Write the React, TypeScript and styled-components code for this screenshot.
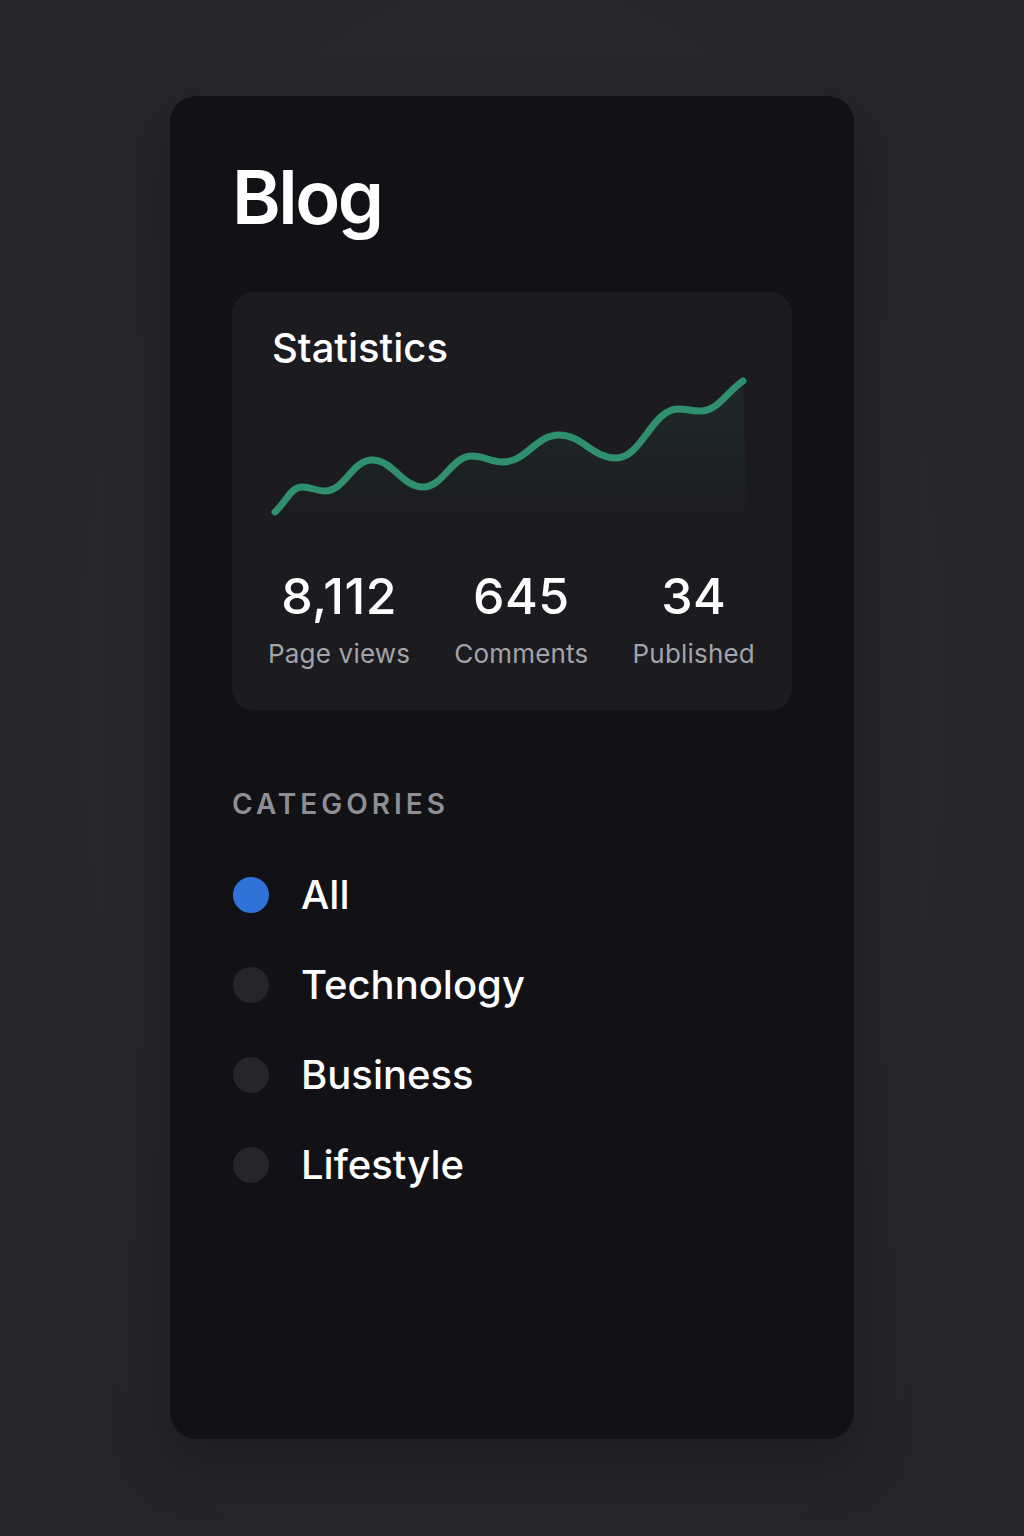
import React from "react";
import styled, { createGlobalStyle } from "styled-components";

const GlobalStyle = createGlobalStyle`
  html, body {
    margin: 0;
    padding: 0;
    background: #27282c;
  }
  body {
    font-family: Inter, "Noto Sans", "Liberation Sans", sans-serif;
    color: #ffffff;
    -webkit-font-smoothing: antialiased;
  }
`;

const Page = styled.div`
  min-height: 1536px;
  background: radial-gradient(ellipse at 50% 45%, #2a2b30 0%, #26272b 60%, #242529 100%);
  display: flex;
  justify-content: center;
  padding-top: 96px;
  box-sizing: border-box;
`;

const Card = styled.div`
  width: 684px;
  height: 1343px;
  box-sizing: border-box;
  background: #121216;
  border-radius: 26px;
  padding: 56px 62px 0;
  display: flex;
  flex-direction: column;
  box-shadow: 0 24px 60px rgba(0, 0, 0, 0.28), 0 0 0 1px rgba(255, 255, 255, 0.015);
`;

const Title = styled.h1`
  margin: 0;
  font-size: 74px;
  line-height: 90px;
  font-weight: 600;
  letter-spacing: -2.5px;
  color: #ffffff;
`;

const Panel = styled.section`
  margin-top: 50px;
  background: #1c1c20;
  border-radius: 22px;
  padding: 33px 0 40px;
  display: flex;
  flex-direction: column;
`;

const PanelTitle = styled.h2`
  margin: 0 0 0 40px;
  font-size: 40px;
  line-height: 46px;
  font-weight: 500;
  color: #ffffff;
`;

const Chart = styled.svg`
  display: block;
  margin: 4px 0 0 40px;
  width: 480px;
  height: 150px;
  overflow: visible;
`;

const StatsRow = styled.div`
  margin-top: 41px;
  padding: 0 37px 0 36px;
  display: flex;
  justify-content: space-between;
`;

const Stat = styled.div`
  display: flex;
  flex-direction: column;
  align-items: center;
  gap: 12px;
`;

const StatValue = styled.div`
  font-size: 50px;
  line-height: 60px;
  font-weight: 500;
  letter-spacing: 0.5px;
  color: #ffffff;
`;

const StatLabel = styled.div`
  font-size: 26px;
  line-height: 32px;
  font-weight: 400;
  letter-spacing: 0.2px;
  color: #a3a3aa;
`;

const SectionLabel = styled.h3`
  margin: 77px 0 0;
  font-size: 28px;
  line-height: 34px;
  font-weight: 600;
  letter-spacing: 4px;
  color: #8e8e94;
  text-transform: uppercase;
`;

const CategoryList = styled.ul`
  list-style: none;
  margin: 51px 0 0;
  padding: 0;
  display: flex;
  flex-direction: column;
  gap: 44px;
`;

const CategoryItem = styled.li`
  display: flex;
  align-items: center;
  gap: 32px;
  height: 46px;
`;

const Dot = styled.span<{ $active?: boolean }>`
  width: 36px;
  height: 36px;
  margin-left: 1px;
  border-radius: 50%;
  flex: none;
  background: ${(p) => (p.$active ? "#2f73d8" : "#25252b")};
`;

const CategoryName = styled.span`
  font-size: 40px;
  line-height: 46px;
  font-weight: 500;
  color: #ffffff;
`;

const points: [number, number][] = [
  [3, 137],
  [30, 112],
  [53, 116],
  [100, 85],
  [151, 112],
  [200, 81],
  [231, 87],
  [287, 60],
  [344, 83],
  [406, 34],
  [428, 36],
  [471, 6],
];

function smoothPath(pts: [number, number][]): string {
  const n = pts.length;
  const slope = (i: number) => {
    if (i === 0) return (pts[1][1] - pts[0][1]) / (pts[1][0] - pts[0][0]);
    if (i === n - 1) return (pts[n - 1][1] - pts[n - 2][1]) / (pts[n - 1][0] - pts[n - 2][0]);
    const a = pts[i][1] - pts[i - 1][1];
    const b = pts[i + 1][1] - pts[i][1];
    if (a * b <= 0) return 0;
    return ((a / (pts[i][0] - pts[i - 1][0])) + (b / (pts[i + 1][0] - pts[i][0]))) / 2;
  };
  let d = `M ${pts[0][0]} ${pts[0][1]}`;
  for (let i = 0; i < n - 1; i++) {
    const [x1, y1] = pts[i];
    const [x2, y2] = pts[i + 1];
    const dx = (x2 - x1) / 2.4;
    const s1 = slope(i);
    const s2 = slope(i + 1);
    d += ` C ${(x1 + dx).toFixed(1)} ${(y1 + s1 * dx).toFixed(1)}, ${(x2 - dx).toFixed(1)} ${(y2 - s2 * dx).toFixed(1)}, ${x2} ${y2}`;
  }
  return d;
}

const linePath = smoothPath(points);
const areaPath = `${linePath} L 475 150 L 3 150 Z`;

const stats = [
  { value: "8,112", label: "Page views" },
  { value: "645", label: "Comments" },
  { value: "34", label: "Published" },
];

const categories = [
  { name: "All", active: true },
  { name: "Technology" },
  { name: "Business" },
  { name: "Lifestyle" },
];

export default function App() {
  return (
    <>
      <GlobalStyle />
      <Page>
        <Card>
          <Title>Blog</Title>
          <Panel>
            <PanelTitle>Statistics</PanelTitle>
            <Chart viewBox="0 0 480 150">
              <defs>
                <linearGradient id="areaFill" x1="0" y1="0" x2="0" y2="1">
                  <stop offset="0%" stopColor="#2e8f6c" stopOpacity="0.12" />
                  <stop offset="100%" stopColor="#2e8f6c" stopOpacity="0" />
                </linearGradient>
              </defs>
              <path d={areaPath} fill="url(#areaFill)" />
              <path
                d={linePath}
                fill="none"
                stroke="#2f8f6e"
                strokeWidth={7}
                strokeLinecap="round"
                strokeLinejoin="round"
              />
            </Chart>
            <StatsRow>
              {stats.map((s) => (
                <Stat key={s.label}>
                  <StatValue>{s.value}</StatValue>
                  <StatLabel>{s.label}</StatLabel>
                </Stat>
              ))}
            </StatsRow>
          </Panel>
          <SectionLabel>Categories</SectionLabel>
          <CategoryList>
            {categories.map((c) => (
              <CategoryItem key={c.name}>
                <Dot $active={c.active} />
                <CategoryName>{c.name}</CategoryName>
              </CategoryItem>
            ))}
          </CategoryList>
        </Card>
      </Page>
    </>
  );
}
